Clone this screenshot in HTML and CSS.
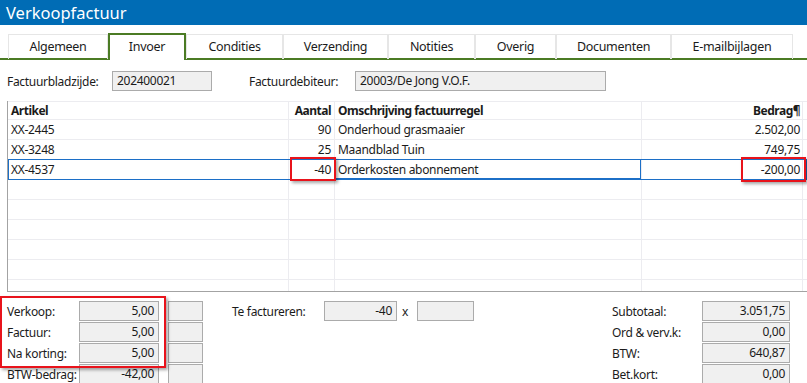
FILE: index.html
```html
<!DOCTYPE html>
<html lang="nl">
<head>
  <meta charset="UTF-8" />
  <title>Verkoopfactuur</title>
  <link rel="stylesheet" href="styles.css">
</head>
<body>
  <div class="titlebar">Verkoopfactuur</div>

  <div class="tabs">
    <div class="tab" style="width:100px">Algemeen</div>
    <div class="tab active" style="width:78px">Invoer</div>
    <div class="tab" style="width:97px">Condities</div>
    <div class="tab" style="width:105px">Verzending</div>
    <div class="tab" style="width:87px">Notities</div>
    <div class="tab" style="width:81px">Overig</div>
    <div class="tab" style="width:115px">Documenten</div>
    <div class="tab" style="width:122px">E-mailbijlagen</div>
  </div>

  <div class="fields">
    <span class="lbl lbl-page">Factuurbladzijde:</span>
    <div class="box box-page">202400021</div>
    <span class="lbl lbl-deb">Factuurdebiteur:</span>
    <div class="box box-deb">20003/De Jong V.O.F.</div>
  </div>

  <div class="grid">
    <div class="row head">
      <div class="cell">Artikel</div>
      <div class="cell num">Aantal</div>
      <div class="cell">Omschrijving factuurregel</div>
      <div class="cell num">Bedrag¶</div>
      <div class="cell flag"><span></span></div>
    </div>
    <div class="row">
      <div class="cell">XX-2445</div>
      <div class="cell num">90</div>
      <div class="cell">Onderhoud grasmaaier</div>
      <div class="cell num">2.502,00</div>
      <div class="cell"></div>
    </div>
    <div class="row">
      <div class="cell">XX-3248</div>
      <div class="cell num">25</div>
      <div class="cell">Maandblad Tuin</div>
      <div class="cell num">749,75</div>
      <div class="cell"></div>
    </div>
    <div class="row sel">
      <div class="cell">XX-4537</div>
      <div class="cell num mark-qty">-40</div>
      <div class="cell edit">Orderkosten abonnement</div>
      <div class="cell num mark-amt">-200,00</div>
      <div class="cell"></div>
    </div>
    <div class="row"><div class="cell"></div><div class="cell"></div><div class="cell"></div><div class="cell"></div><div class="cell"></div></div>
    <div class="row"><div class="cell"></div><div class="cell"></div><div class="cell"></div><div class="cell"></div><div class="cell"></div></div>
    <div class="row"><div class="cell"></div><div class="cell"></div><div class="cell"></div><div class="cell"></div><div class="cell"></div></div>
    <div class="row"><div class="cell"></div><div class="cell"></div><div class="cell"></div><div class="cell"></div><div class="cell"></div></div>
    <div class="row"><div class="cell"></div><div class="cell"></div><div class="cell"></div><div class="cell"></div><div class="cell"></div></div>
    <div class="row"><div class="cell"></div><div class="cell"></div><div class="cell"></div><div class="cell"></div><div class="cell"></div></div>
  </div>

  <div class="totals">
    <div class="group left">
      <div class="hl">
        <div class="line"><span class="lbl">Verkoop:</span><div class="box val">5,00</div><div class="box small"></div></div>
        <div class="line"><span class="lbl">Factuur:</span><div class="box val">5,00</div><div class="box small"></div></div>
        <div class="line"><span class="lbl">Na korting:</span><div class="box val">5,00</div><div class="box small"></div></div>
      </div>
      <div class="line"><span class="lbl">BTW-bedrag:</span><div class="box val">-42,00</div><div class="box small"></div></div>
    </div>

    <div class="group mid">
      <div class="line">
        <span class="lbl">Te factureren:</span>
        <div class="box val">-40</div>
        <span class="times">x</span>
        <div class="box empty"></div>
      </div>
    </div>

    <div class="group right">
      <div class="line"><span class="lbl">Subtotaal:</span><div class="box val">3.051,75</div></div>
      <div class="line"><span class="lbl">Ord &amp; verv.k:</span><div class="box val">0,00</div></div>
      <div class="line"><span class="lbl">BTW:</span><div class="box val">640,87</div></div>
      <div class="line"><span class="lbl">Bet.kort:</span><div class="box val">0,00</div></div>
    </div>
  </div>
</body>
</html>
```

FILE: styles.css
```css
* {
  box-sizing: border-box;
}
body {
  margin: 0;
  width: 807px;
  height: 383px;
  overflow: hidden;
  background: #fff;
  color: #1b1b1b;
  font-family: 'Noto Sans', sans-serif;
  font-size: 12px;
  letter-spacing: -0.3px;
}
.titlebar {
  height: 25px;
  background: #006cb5;
  color: #fff;
  font-size: 16.5px;
  letter-spacing: 0;
  line-height: 25px;
  padding-left: 6px;
}
.tabs {
  display: flex;
  padding: 8px 0 0 8px;
  height: 35px;
  border-bottom: 2px solid #4b7b24;
}
.tab {
  height: 25px;
  margin-top: 1px;
  border: 1px solid #e6e6e6;
  border-bottom: none;
  text-align: center;
  line-height: 24px;
  font-size: 12.5px;
}
.active {
  height: 27px;
  margin-top: 0;
  margin-bottom: -2px;
  border: 2px solid #4b7b24;
  border-bottom: none;
  background: #fff;
  line-height: 24px;
}
.fields {
  display: flex;
  align-items: center;
  height: 20px;
  margin-top: 11px;
}
.lbl {
  white-space: nowrap;
}
.lbl-page {
  margin-left: 7px;
  width: 105px;
}
.lbl-deb {
  margin-left: 37px;
  width: 106px;
}
.box {
  height: 20px;
  background: #f0f0f0;
  border: 1px solid #ababab;
  line-height: 18px;
  padding: 0 4px;
  white-space: nowrap;
}
.box-page {
  width: 100px;
}
.box-deb {
  width: 251px;
}
.grid {
  margin: 10px 0 0 7px;
  height: 191px;
  border-left: 1px solid #a3a3a3;
  border-bottom: 1px solid #a3a3a3;
  overflow: hidden;
}
.row {
  display: grid;
  grid-template-columns: 281px 46px 307px 161px 1fr;
  height: 20px;
  border-bottom: 1px solid #ececf0;
}
.row.head {
  height: 19px;
  border-top: 1px solid #ececf0;
  font-weight: bold;
  letter-spacing: -0.5px;
}
.cell {
  border-right: 1px solid #ececf0;
  padding: 0 3px;
  line-height: 19px;
  white-space: nowrap;
  overflow: visible;
}
.head .cell {
  line-height: 17px;
}
.num {
  text-align: right;
  padding-right: 3px;
}
.row .cell:nth-child(3) {
  padding-left: 3px;
}
.row .cell:nth-child(4) {
  padding-right: 2px;
}
.flag span {
  display: block;
  width: 2px;
  height: 6px;
  margin: 5px 0 0 2px;
  background: #f2c230;
}
.sel {
  position: relative;
}
.sel::after {
  content: '';
  position: absolute;
  left: 0;
  right: 0;
  top: -1px;
  bottom: -1px;
  border: 1px solid #1c6fc7;
  pointer-events: none;
}
.edit {
  position: relative;
}
.edit::after {
  content: '';
  position: absolute;
  left: -1px;
  right: 0;
  top: -1px;
  bottom: 0;
  border: 1px solid #1c6fc7;
}
.mark-qty,
.mark-amt {
  position: relative;
}
.mark-qty::before,
.mark-amt::before {
  content: '';
  position: absolute;
  border: 2px solid #e8131b;
  box-shadow: 2px 2px 3px rgba(0, 0, 0, 0.35);
  z-index: 2;
}
.mark-qty::before {
  left: 1px;
  right: -2px;
  top: -3px;
  bottom: -2px;
}
.mark-amt::before {
  right: -4px;
  width: 61px;
  top: -3px;
  bottom: -3px;
}
.totals {
  display: flex;
  padding-top: 9px;
}
.group {
  display: flex;
  flex-direction: column;
  gap: 1px;
}
.line {
  display: flex;
  align-items: center;
  height: 20px;
}
.left {
  padding-left: 7px;
}
.hl {
  position: relative;
  display: flex;
  flex-direction: column;
  gap: 1px;
}
.hl::after {
  content: '';
  position: absolute;
  left: -7px;
  width: 162px;
  top: -5px;
  height: 68px;
  border: 2px solid #e8131b;
  box-shadow: 2px 2px 3px rgba(0, 0, 0, 0.35);
}
.left .lbl {
  width: 72px;
}
.val {
  text-align: right;
}
.left .val {
  width: 80px;
}
.small {
  width: 35px;
  margin-left: 9px;
}
.mid {
  margin-left: 29px;
}
.mid .lbl {
  width: 92px;
}
.mid .val {
  width: 73px;
}
.times {
  width: 20px;
  padding-left: 5px;
}
.empty {
  width: 57px;
}
.right {
  margin-left: 138px;
}
.right .lbl {
  width: 90px;
}
.right .val {
  width: 88px;
}
```
